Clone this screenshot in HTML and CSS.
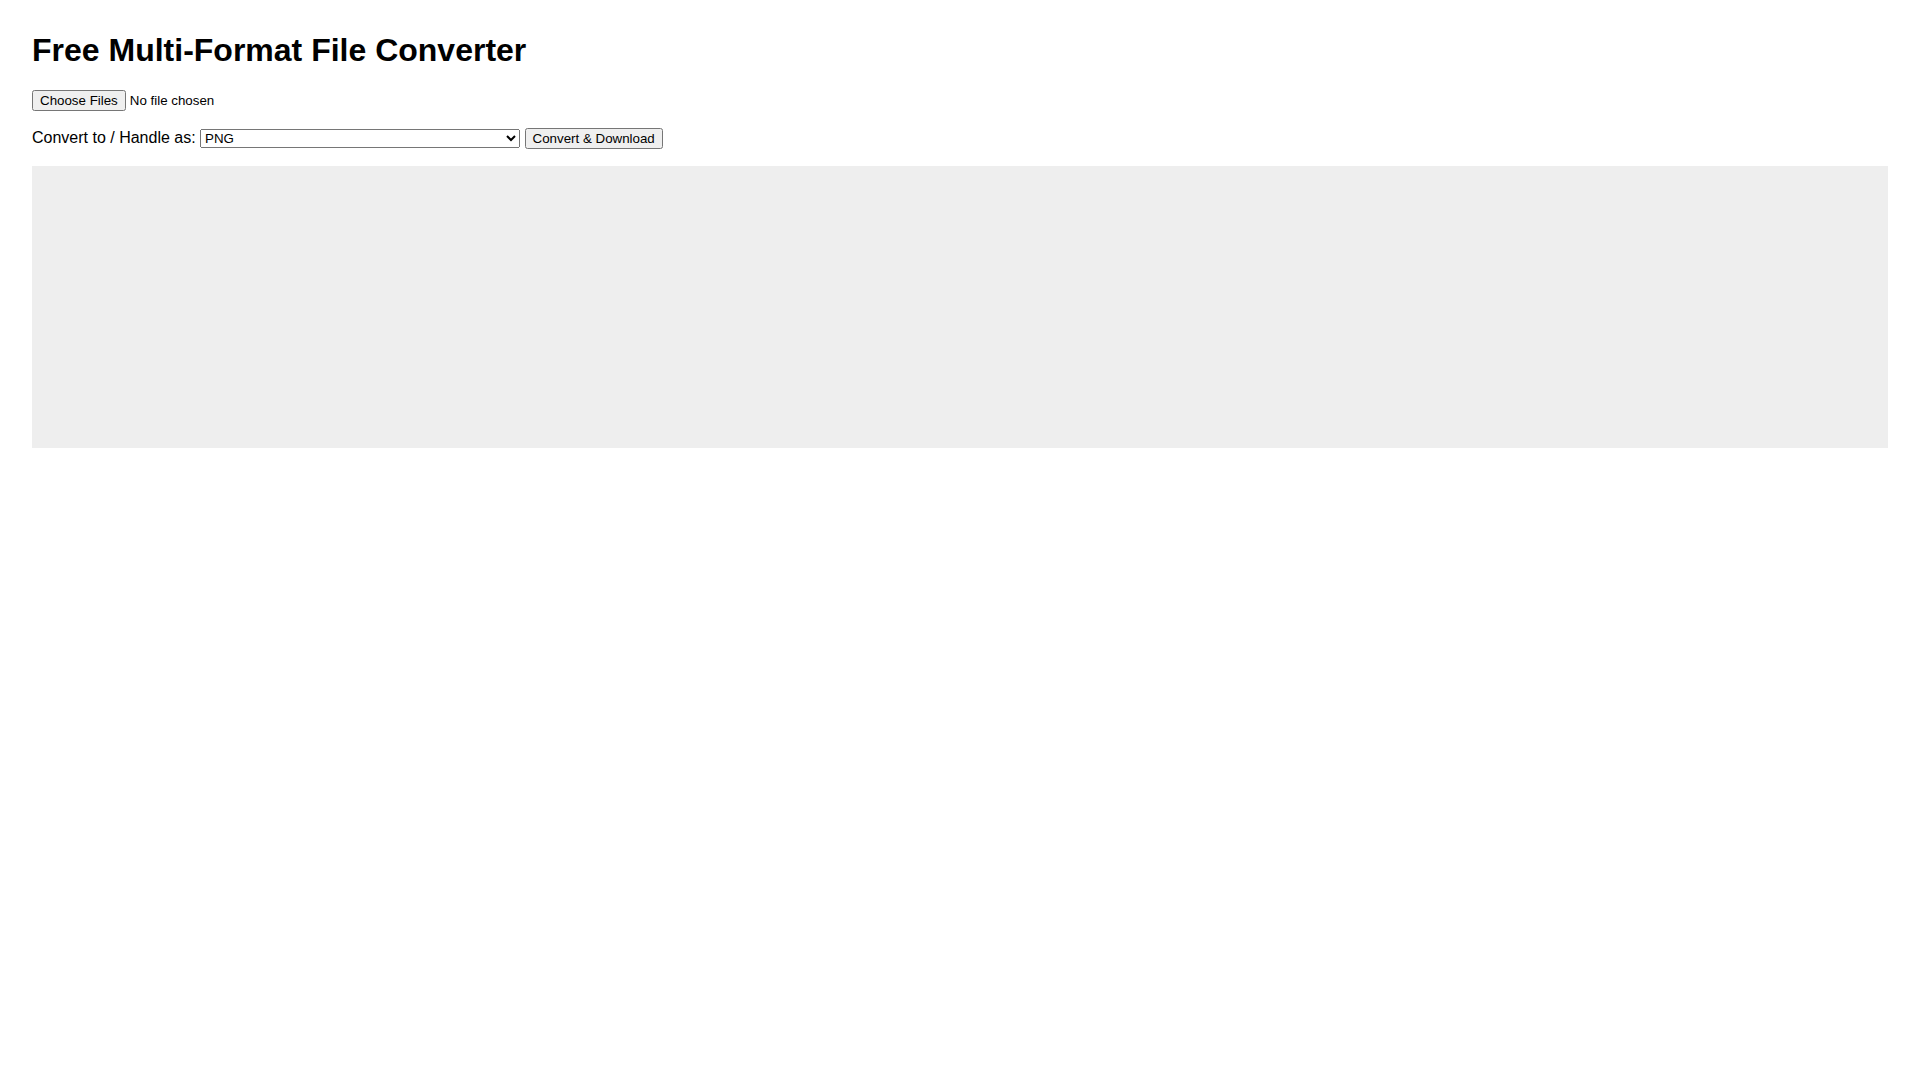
FILE: index.html
```html
<!DOCTYPE html>
<html lang="en">
<head>
<meta charset="UTF-8">
<title>Free Multi-Format File Converter</title>
<link rel="stylesheet" href="styles.css">
</head>
<body>

<h1>Free Multi-Format File Converter</h1>

<div class="row">
  <input type="file" id="upload" multiple>
</div>

<div class="row">
  <label for="format">Convert to / Handle as:</label>
  <select id="format">
    <option value="png">PNG</option>
    <option value="jpeg">JPG</option>
    <option value="webp">WEBP</option>
    <option value="gif">GIF</option>
    <option value="bmp">BMP</option>
    <option value="pdf">PDF</option>
    <option value="txt">TXT</option>
    <option value="zip">ZIP</option>
  </select>
  <button id="convert">Convert &amp; Download</button>
</div>

<div id="preview"></div>

</body>
</html>
```

FILE: styles.css
```css
body {
  margin: 0;
  padding: 32px;
  font-family: Arial, "Liberation Sans", sans-serif;
  color: #000;
  background: #fff;
}
h1 {
  font-size: 32px;
  margin: 0 0 21px;
}
.row {
  margin-bottom: 17px;
}
#format {
  width: 320px;
}
#preview {
  background: #eee;
  padding: 16px;
  min-height: 250px;
}
```
